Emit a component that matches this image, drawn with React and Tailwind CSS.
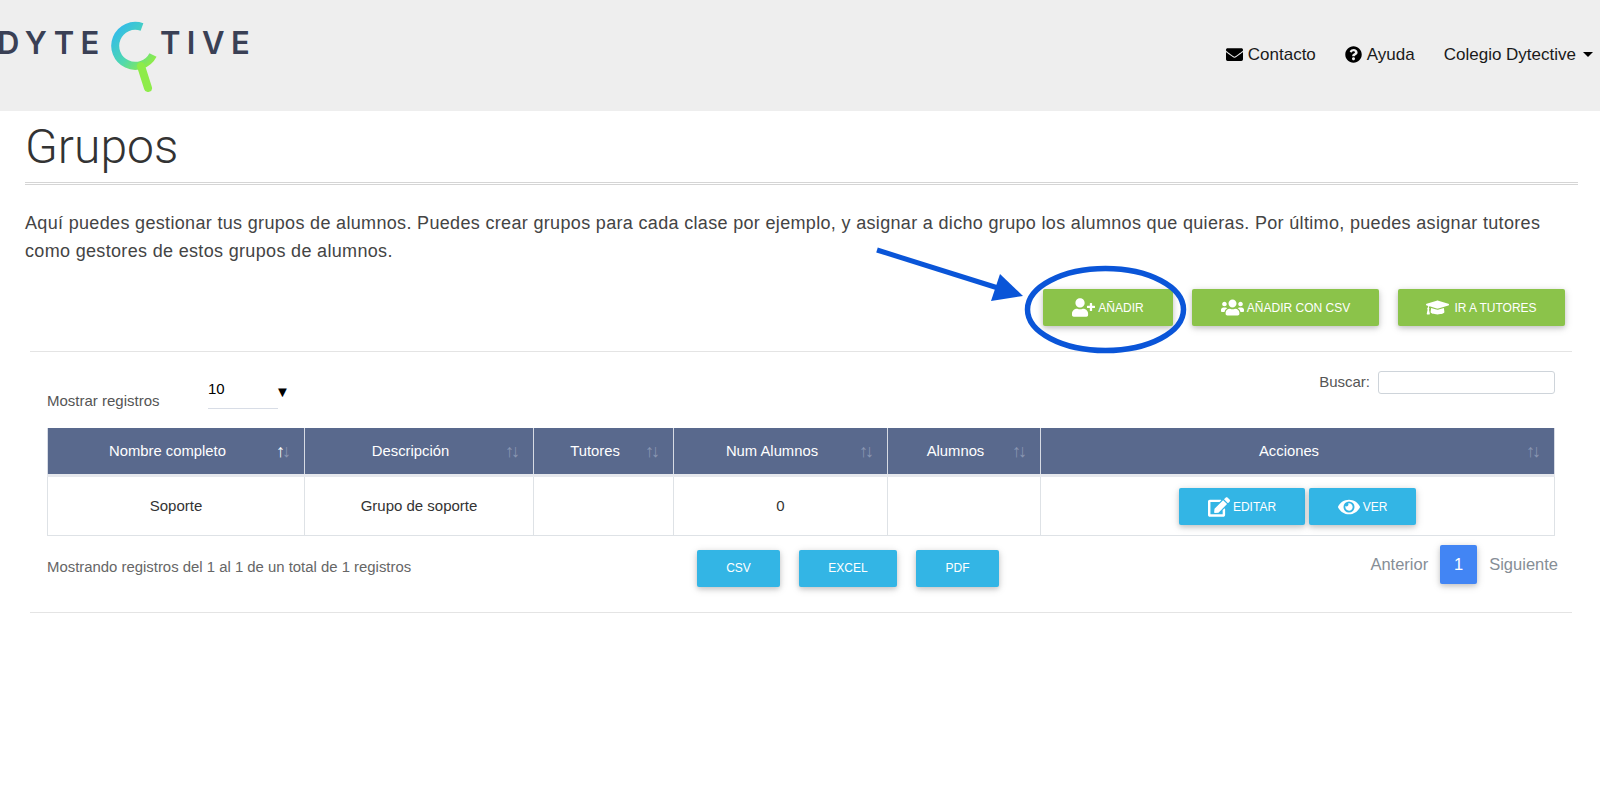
import React from 'react'
import { FaEnvelope, FaQuestionCircle, FaUserPlus, FaUsers, FaGraduationCap, FaEdit, FaEye } from 'react-icons/fa'

const columns = [
  { title: 'Nombre completo', width: 'w-[257px]', sorted: true },
  { title: 'Descripción', width: 'w-[229px]' },
  { title: 'Tutores', width: 'w-[140px]' },
  { title: 'Num Alumnos', width: 'w-[214px]' },
  { title: 'Alumnos', width: 'w-[153px]' },
  { title: 'Acciones', width: 'w-auto' },
]

const Logo = () => (
  <div className="flex items-start text-[31px] leading-none font-semibold text-[#3a4055] ml-[-3px] mt-[24px] font-['Inter',sans-serif]">
    <span className="tracking-[6.5px] mt-[3px]">DYTE</span>
    <svg width="50" height="72" viewBox="108 20 50 72" className="mt-[-3px] ml-[2px] shrink-0">
      <defs>
        <linearGradient id="ring" x1="0" y1="0" x2="1" y2="1">
          <stop offset="0" stopColor="#2fb8f0" />
          <stop offset="0.55" stopColor="#4fd8b0" />
          <stop offset="1" stopColor="#96ee3a" />
        </linearGradient>
      </defs>
      <path d="M142 26 A20 20 0 1 0 153 54" fill="none" stroke="url(#ring)" strokeWidth="8" />
      <path d="M141 65 L148 87" fill="none" stroke="#8eec4a" strokeWidth="8" strokeLinecap="round" />
    </svg>
    <span className="tracking-[6.5px] mt-[3px] ml-[2px]">TIVE</span>
  </div>
)

const GreenButton = ({ icon, children, className }) => (
  <button className={`h-[37px] bg-[#8bc34a] text-white text-[12px] rounded-[2px] flex items-center justify-center gap-[2px] shadow-[0_2px_5px_rgba(0,0,0,0.16),0_2px_10px_rgba(0,0,0,0.12)] ${className}`}>
    {icon}
    {children}
  </button>
)

const BlueButton = ({ children, className }) => (
  <button className={`h-[37px] bg-[#33b5e5] text-white text-[12px] rounded-[2px] flex items-center justify-center gap-[3px] shadow-[0_2px_5px_rgba(0,0,0,0.16),0_2px_10px_rgba(0,0,0,0.12)] ${className}`}>
    {children}
  </button>
)

const App = () => {
  return (
    <div className="relative min-h-[794px] bg-white overflow-hidden font-['Liberation_Sans',sans-serif] text-[#333]">
      <header className="h-[111px] bg-[#eeeeee] flex justify-between overflow-hidden">
        <Logo />
        <nav className="flex items-center gap-[29px] pr-[24px] pb-[2px] text-[17px] text-[#1a1a1a] relative">
          <a className="flex items-center gap-[5px]"><FaEnvelope className="text-[17px] text-black" /> Contacto</a>
          <a className="flex items-center gap-[5px]"><FaQuestionCircle className="text-[17px] text-black" /> Ayuda</a>
          <a>Colegio Dytective</a>
          <span className="absolute right-[24px] translate-x-[17px] top-[52px] border-x-[5px] border-x-transparent border-t-[5px] border-t-black" />
        </nav>
      </header>

      <main className="px-[25px]">
        <h1 className="pt-[10px] pb-[9px] text-[48px] leading-[52px] font-light font-['Roboto',sans-serif] text-[#333] border-b-[3px] border-double border-[#d5d5d5] mr-[-3px]">Grupos</h1>
        <p className="mt-[24px] text-[18px] leading-[28px] tracking-[0.33px] text-[#444] pr-[20px]">
          Aquí puedes gestionar tus grupos de alumnos. Puedes crear grupos para cada clase por ejemplo, y asignar a dicho grupo los alumnos que quieras. Por último, puedes asignar tutores como gestores de estos grupos de alumnos.
        </p>

        <div className="flex justify-end gap-[19px] mt-[24px] pr-[10px]">
          <GreenButton className="w-[130px]" icon={<FaUserPlus className="text-[23px] mr-[1px]" />}>AÑADIR</GreenButton>
          <GreenButton className="w-[187px]" icon={<FaUsers className="text-[23px] mr-[1px]" />}>AÑADIR CON CSV</GreenButton>
          <GreenButton className="w-[167px]" icon={<FaGraduationCap className="text-[23px] mr-[3px]" />}>IR A TUTORES</GreenButton>
        </div>

        <section className="mt-[25px] ml-[5px] mr-[3px] border-y border-[#e4e4e4] h-[262px] px-[17px]">
          <div className="flex justify-between h-[76px]">
            <div className="flex items-start pt-[27px] text-[15px] text-[#555]">
              <span className="w-[161px] mt-[11px]">Mostrar registros</span>
              <div className="w-[70px] h-[31px] border-b border-[#d8dde6] text-[15px] text-black mt-[-1px]">10</div>
              <span className="ml-[-3px] mt-[2px] text-[15px] text-black">▼</span>
            </div>
            <label className="flex items-start pt-[19px] gap-[8px] text-[15px] text-[#555]">
              <span>Buscar:</span>
              <input className="w-[177px] h-[23px] border border-[#ced4da] rounded-[3px] bg-white" />
            </label>
          </div>

          <table className="w-[1508px] table-fixed border-collapse text-[15px]">
            <thead>
              <tr className="h-[47px] bg-[#59698d] text-white text-[14.8px]">
                {columns.map((col) => (
                  <th key={col.title} className={`${col.width} relative font-normal pr-[17px] border-x border-[#d7dbe4] border-b-[3px] border-b-[#e6e8ed]`}>
                    {col.title}
                    <span className="absolute right-[16px] top-[10px] text-[18px] tracking-[-3px] text-[#8a96b2]">
                      <span className={col.sorted ? 'text-white font-bold' : ''}>↑</span>↓
                    </span>
                  </th>
                ))}
              </tr>
            </thead>
            <tbody>
              <tr className="h-[60px] text-center text-[#333]">
                <td className="border border-[#dee2e6] pt-[2px]">Soporte</td>
                <td className="border border-[#dee2e6] pt-[2px]">Grupo de soporte</td>
                <td className="border border-[#dee2e6]"></td>
                <td className="border border-[#dee2e6] pt-[2px]">0</td>
                <td className="border border-[#dee2e6]"></td>
                <td className="border border-[#dee2e6] pt-[2px]">
                  <div className="flex justify-center gap-[4px]">
                    <BlueButton className="w-[126px]"><FaEdit className="text-[22px]" /> EDITAR</BlueButton>
                    <BlueButton className="w-[107px]"><FaEye className="text-[22px]" /> VER</BlueButton>
                  </div>
                </td>
              </tr>
            </tbody>
          </table>

          <div className="flex items-start justify-between mt-[9px]">
            <span className="mt-[11px] w-[650px] text-[14.9px] text-[#666]">Mostrando registros del 1 al 1 de un total de 1 registros</span>
            <div className="flex gap-[19px] mt-[5px]">
              <BlueButton className="w-[83px]">CSV</BlueButton>
              <BlueButton className="w-[98px]">EXCEL</BlueButton>
              <BlueButton className="w-[83px]">PDF</BlueButton>
            </div>
            <div className="flex-1 flex items-center justify-end gap-[12px] text-[16.5px] text-[#868e96] mr-[-3px]">
              <span>Anterior</span>
              <span className="w-[37px] h-[39px] bg-[#4285f4] text-white rounded-[2px] flex items-center justify-center shadow-[0_2px_5px_rgba(0,0,0,0.16),0_2px_10px_rgba(0,0,0,0.12)]">1</span>
              <span>Siguiente</span>
            </div>
          </div>
        </section>
      </main>

      {/* anotacion azul sobre la captura */}
      <svg className="absolute left-0 top-0 pointer-events-none" width="1600" height="794">
        <ellipse cx="1105.5" cy="309.5" rx="78" ry="41" fill="none" stroke="#0a55d8" strokeWidth="5.5" />
        <path d="M877 250 L998 288" stroke="#0a55d8" strokeWidth="5" fill="none" />
        <path d="M1023 296 L1000 274 L991 301 Z" fill="#0a55d8" />
      </svg>
    </div>
  )
}

export default App
